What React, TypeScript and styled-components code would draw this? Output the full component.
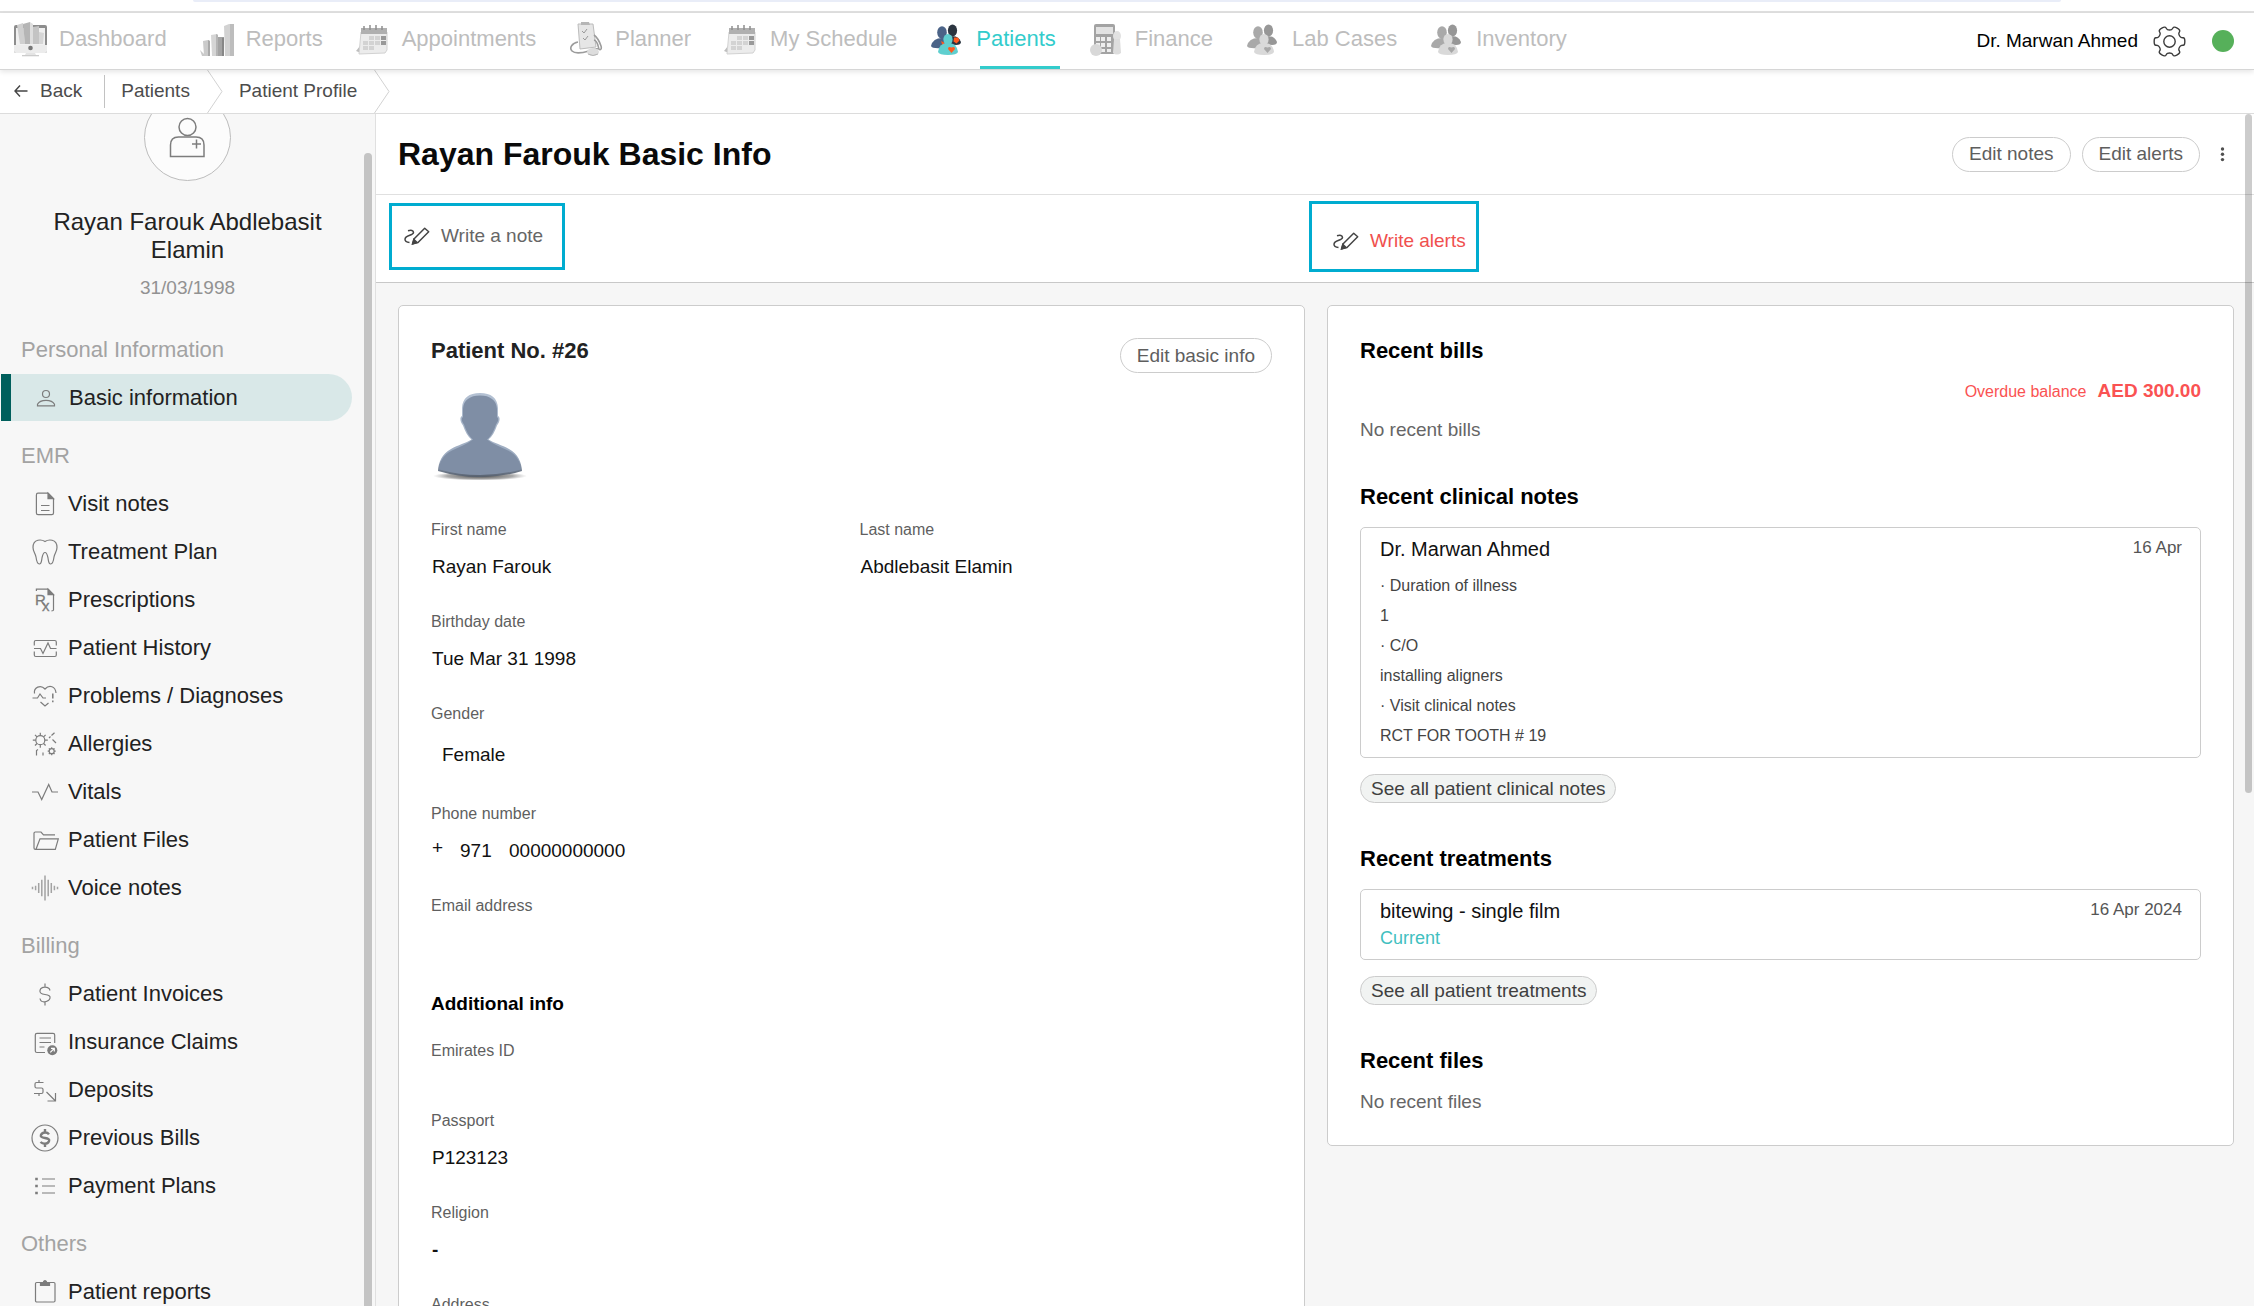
import React from "react";
import styled, { createGlobalStyle, css } from "styled-components";

const line = "#dcdcdc";
const edge = "#cccccc";
const teal = "#33cccc";
const frameBlue = "#00acd0";
const danger = "#fa5252";

const GlobalStyle = createGlobalStyle`
  *, *::before, *::after { box-sizing: border-box; }
  body {
    margin: 0;
    background: #ffffff;
    color: #111111;
    font-family: "Liberation Sans", Arial, Helvetica, sans-serif;
    font-size: 19px;
  }
  button { font-family: inherit; cursor: pointer; }
  a { color: inherit; text-decoration: none; }
  svg { display: block; flex: none; }
`;

/* ---------- shell ---------- */

const Shell = styled.div`
  display: flex;
  flex-direction: column;
  height: 100vh;
  overflow: hidden;
`;

const TopStrip = styled.div`
  flex: none;
  height: 13px;
  padding: 0 193px;
  border-bottom: 2px solid #e0e0e0;
  &::before {
    content: "";
    display: block;
    height: 2px;
    border-radius: 0 0 8px 8px;
    background: #e9edf8;
  }
`;

const NavBar = styled.header`
  flex: none;
  display: flex;
  justify-content: space-between;
  height: 57px;
  padding: 0 20px 0 13px;
  border-bottom: 1px solid #d6d6d6;
  box-shadow: 0 2px 5px rgba(0, 0, 0, 0.1);
  z-index: 1;
`;

const Tabs = styled.nav`
  display: flex;
  gap: 33px;
`;

const Tab = styled.a<{ $active?: boolean }>`
  display: flex;
  align-items: center;
  gap: 12px;
  padding-bottom: 4px;
  font-size: 22px;
  color: ${(p) => (p.$active ? teal : "#bdbdbd")};
`;

const TabLabel = styled.span<{ $active?: boolean }>`
  position: relative;
  line-height: 26px;
  ${(p) =>
    p.$active &&
    css`
      &::after {
        content: "";
        position: absolute;
        left: 4px;
        right: -4px;
        bottom: -17px;
        height: 3px;
        background: ${teal};
      }
    `}
`;

const UserArea = styled.div`
  display: flex;
  align-items: center;
  color: #000000;
`;

const IconButton = styled.button`
  display: flex;
  padding: 0;
  border: 0;
  background: none;
  color: #3c3c3c;
`;

const SettingsButton = styled(IconButton)`
  margin: 0 26px 0 15px;
`;

const StatusDot = styled.span`
  width: 22px;
  height: 22px;
  border-radius: 50%;
  background: #56b05a;
`;

const Crumbs = styled.nav`
  flex: none;
  display: flex;
  align-items: center;
  height: 44px;
  border-bottom: 1px solid ${line};
  color: #4c4c4c;
  background: #ffffff;
`;

const BackLink = styled.a`
  display: flex;
  align-items: center;
  gap: 12px;
  height: 33px;
  padding: 0 22px 2px 14px;
  border-right: 1px solid #c2c2c2;
`;

const Crumb = styled.a`
  padding: 0 17px 2px 16px;
`;

const Body = styled.div`
  flex: 1;
  min-height: 0;
  display: grid;
  grid-template-columns: 376px minmax(0, 1fr);
`;

/* ---------- sidebar ---------- */

const Sidebar = styled.aside`
  position: relative;
  overflow: hidden;
  border-right: 1px solid #e0e0e0;
  background: #f7f7f7;
  color: #222222;
`;

const SideThumb = styled.div`
  position: absolute;
  top: 39px;
  right: 3px;
  bottom: 0;
  width: 8px;
  border-radius: 4px 4px 0 0;
  background: #c4c4c4;
`;

const Profile = styled.div`
  display: flex;
  flex-direction: column;
  align-items: center;
  margin-top: -20px;
  padding-bottom: 15px;
  text-align: center;
`;

const ProfileCircle = styled.button`
  display: flex;
  align-items: center;
  justify-content: center;
  width: 87px;
  height: 87px;
  margin-bottom: 27px;
  padding: 0;
  border: 1px solid #bdbdbd;
  border-radius: 50%;
  background: #fcfcfc;
`;

const ProfileName = styled.div`
  width: 300px;
  font-size: 24px;
  line-height: 28px;
`;

const ProfileDate = styled.div`
  margin-top: 12px;
  line-height: 24px;
  color: #929292;
`;

const GroupTitle = styled.h2`
  margin: 11px 0 0;
  padding-left: 21px;
  font-size: 22px;
  font-weight: 400;
  line-height: 48px;
  color: #a3a3a3;
`;

const List = styled.ul`
  margin: 0;
  padding: 0;
  list-style: none;
`;

const SideLink = styled.a<{ $active?: boolean }>`
  display: flex;
  align-items: center;
  gap: 9px;
  height: 47px;
  margin: 0 23px 1px 0;
  padding-left: 31px;
  font-size: 22px;
  color: #222222;
  ${(p) =>
    p.$active &&
    css`
      margin-left: 1px;
      padding-left: 21px;
      border-left: 10px solid #005f5c;
      border-radius: 0 24px 24px 0;
      background: #d9e8e8;
    `}
`;

/* ---------- main column ---------- */

const Main = styled.main`
  position: relative;
  overflow: hidden;
  background: #f6f6f6;
`;

const MainThumb = styled.div`
  position: absolute;
  top: 0;
  right: 2px;
  width: 7px;
  height: 57%;
  border-radius: 4px;
  background: rgba(0, 0, 0, 0.2);
`;

const TitleRow = styled.div`
  display: flex;
  align-items: center;
  justify-content: space-between;
  height: 81px;
  padding: 0 25px 0 22px;
  border-bottom: 1px solid #e0e0e0;
  background: #ffffff;
`;

const PageTitle = styled.h1`
  margin: 0;
  font-size: 32px;
  color: #0a0a0a;
`;

const Actions = styled.div`
  display: flex;
  align-items: center;
  gap: 11px;
`;

const PillButton = styled.button`
  height: 35px;
  padding: 0 16px;
  border: 1px solid ${edge};
  border-radius: 18px;
  background: #ffffff;
  font-size: 19px;
  color: #5e5e5e;
`;

const MoreButton = styled(IconButton)`
  padding: 0 4px 0 9px;
`;

const AlertRow = styled.div`
  display: grid;
  grid-template-columns: 1fr 1fr;
  align-items: center;
  height: 88px;
  padding: 0 12px 4px 0;
  border-bottom: 1px solid #c8c8c8;
  background: #ffffff;
`;

const WriteButton = styled.button<{ $alert?: boolean }>`
  justify-self: start;
  display: flex;
  align-items: center;
  gap: 11px;
  border: 3px solid ${frameBlue};
  background: #ffffff;
  font-size: 19px;
  color: ${(p) => (p.$alert ? "#f0504e" : "#666666")};
  ${(p) =>
    p.$alert
      ? css`
          height: 71px;
          padding: 8px 10px 0 21px;
        `
      : css`
          height: 67px;
          margin-left: 13px;
          padding: 0 19px 2px 12px;
        `}
`;

const Cards = styled.div`
  display: grid;
  grid-template-columns: 1fr 1fr;
  align-items: start;
  gap: 22px;
  padding: 22px 20px 22px 22px;
`;

const Card = styled.section`
  padding: 32px;
  border: 1px solid ${edge};
  border-radius: 5px;
  background: #ffffff;
`;

const CardHead = styled.div`
  display: flex;
  align-items: flex-start;
  justify-content: space-between;
  margin-bottom: 13px;
`;

const CardTitle = styled.h2`
  margin: 0;
  font-size: 22px;
  line-height: 25px;
  color: #222222;
`;

const SubTitle = styled.h3`
  margin: 26px 0 25px;
  font-size: 19px;
  line-height: 24px;
  color: #000000;
`;

const Fields = styled.dl<{ $gap?: boolean }>`
  display: grid;
  grid-template-columns: 1fr 1fr;
  column-gap: 16px;
  margin: ${(p) => (p.$gap ? "34px 0 0" : "0")};
`;

const Field = styled.div<{ $half?: boolean }>`
  grid-column: ${(p) => (p.$half ? "auto" : "1 / -1")};
  margin-bottom: 33px;
`;

const Label = styled.dt`
  margin-bottom: 15px;
  font-size: 16px;
  line-height: 20px;
  color: #5f5f5f;
`;

const Value = styled.dd<{ $boxed?: boolean }>`
  display: flex;
  min-height: 2px;
  margin: 0;
  padding: ${(p) => (p.$boxed ? "0 11px" : "0 1px")};
  line-height: ${(p) => (p.$boxed ? "32px" : "24px")};
  color: #111111;
`;

const PhonePlus = styled.span`
  width: 28px;
  line-height: 18px;
`;

const PhoneCode = styled.span`
  width: 49px;
`;

const SectionTitle = styled.h2`
  margin: 0 0 18px;
  font-size: 22px;
  line-height: 25px;
  color: #000000;
`;

const Section = styled.section`
  & + & { margin-top: 43px; }
`;

const Balance = styled.div`
  display: flex;
  justify-content: flex-end;
  align-items: baseline;
  gap: 11px;
  margin-bottom: 17px;
  font-size: 16px;
  line-height: 20px;
  color: ${danger};
  strong { font-size: 19px; }
`;

const Muted = styled.p`
  margin: 0;
  line-height: 22px;
  color: #666666;
`;

const Entry = styled.article`
  padding: 9px 18px 6px 19px;
  border: 1px solid ${edge};
  border-radius: 5px;
`;

const EntryHead = styled.div`
  display: flex;
  align-items: flex-start;
  justify-content: space-between;
  font-size: 20px;
  line-height: 24px;
`;

const EntryDate = styled.time`
  font-size: 17px;
  line-height: 22px;
  color: #555555;
`;

const NoteLines = styled.div`
  margin-top: 10px;
  font-size: 16px;
  line-height: 30px;
  color: #444444;
`;

const Status = styled.div`
  font-size: 18px;
  line-height: 30px;
  color: #41bfbf;
`;

const SeeAll = styled.button`
  height: 29px;
  margin-top: 16px;
  padding: 0 10px;
  border: 1px solid ${edge};
  border-radius: 15px;
  background: #f1f3f2;
  font-size: 19px;
  line-height: 24px;
  color: #404040;
`;

/* ---------- header drawings ---------- */

const Art: React.FC<{ children: React.ReactNode }> = ({ children }) => (
  <svg width="34" height="36" viewBox="0 -1 34 36" aria-hidden="true">
    {children}
  </svg>
);

const DashboardArt = () => (
  <Art>
    <rect x="1" y="3" width="33" height="28" rx="2" fill="#8d8d8d" />
    <rect x="3" y="6" width="29" height="17" fill="#f0f0f0" />
    <path d="M1 23h33v6q0 2-2 2H3q-2 0-2-2z" fill="#ececec" />
    <path d="M4 3l6-2 2 21H7z" fill="#cfcfcf" />
    <path d="M10 2l7-2v22h-5z" fill="#b5b5b5" />
    <path d="M17 0l3 2v20h-3z" fill="#dedede" />
    <path d="M20 5l6-1v18h-6z" fill="#c4c4c4" />
    <path d="M26 10l5 1-1 11h-4z" fill="#d6d6d6" />
    <circle cx="17.500" cy="26" r="2.300" fill="#777" />
    <path d="M13 31h9l1 2H12z" fill="#e4e4e4" />
    <path d="M9 33h17v1.300H9z" fill="#cccccc" />
  </Art>
);

const ReportsArt = () => (
  <Art>
    <path d="M0 28l4 4v2H2z" fill="#c9c9c9" />
    <path d="M3 19l5-1 2 1v15H4z" fill="#cbcbcb" />
    <path d="M8 18l2 1v15H8z" fill="#a9a9a9" />
    <path d="M11 13l6-1 1 1v21h-6z" fill="#d5d5d5" />
    <path d="M16 12l2 1v21h-2z" fill="#b5b5b5" />
    <path d="M18 15l5 0 1 1v18h-6z" fill="#a4a4a4" />
    <path d="M22 16l2-1v19h-2z" fill="#878787" />
    <path d="M24 4l5-2 5 0v32h-9z" fill="#d2d2d2" />
    <path d="M30 2h4v32h-4z" fill="#bdbdbd" />
  </Art>
);

const CalendarArt = () => (
  <Art>
    <path d="M0 29l4-5 1 7z" fill="#bdbdbd" />
    <path d="M5 10h26v18l-2 3-26 1z" fill="#ececec" stroke="#d2d2d2" />
    <path d="M5 6h26v6H5z" fill="#b0b0b0" />
    <path d="M8 4v4M14 3v5M20 3v5M26 4v4" stroke="#8f8f8f" strokeWidth="1.500" />
    <path
      d="M13 14h5v4h-5zM19 14h5v4h-5zM7 19h5v4H7zM13 19h5v4h-5zM19 19h5v4h-5zM7 24h5v4H7zM13 24h5v4h-5z"
      fill="#d3d3d3"
    />
    <path d="M25 14h5v4h-5zM25 19h5v4h-5z" fill="#999999" />
  </Art>
);

const PlannerArt = () => (
  <Art>
    <path d="M9 2l15 0 3 23-16 2z" fill="#e6e6e6" stroke="#bcbcbc" />
    <path d="M12 0h8l1 3h-9z" fill="#b6b6b6" />
    <path d="M13 9l2 2 3-4M14 16l2 2 3-4" fill="none" stroke="#999" />
    <path
      d="M25 13c4 3 6 8 7 11s-1 5-2 3-1-8-5-9M9 20c-6 1-9 6-6 9s10 2 17 0 5-3 10-2"
      fill="none"
      stroke="#9c9c9c"
      strokeWidth="1.600"
    />
    <ellipse cx="24" cy="30" rx="6" ry="4" fill="#dddddd" />
    <path d="M19 32q5 3 10 0" fill="none" stroke="#b5b5b5" />
  </Art>
);

const FinanceArt = () => (
  <Art>
    <rect x="5" y="2" width="21" height="30" rx="2" fill="#a3a3a3" />
    <rect x="7" y="5" width="17" height="7" fill="#e2e2e2" />
    <path
      d="M7 15h4v4H7zM12 15h4v4h-4zM18 15h4v4h-4zM7 21h4v4H7zM12 21h4v4h-4zM18 21h4v4h-4zM12 27h4v3h-4zM18 27h4v3h-4z"
      fill="#eeeeee"
    />
    <circle cx="7" cy="28" r="6" fill="#d8d8d8" />
    <ellipse cx="28" cy="14" rx="4" ry="5" fill="#e2e2e2" />
    <path d="M25 17h6l1 14q-4 3-8 0z" fill="#dddddd" />
  </Art>
);

const PeopleArt: React.FC<{ color?: boolean }> = ({ color }) => {
  const [back, left, front, mark] = color
    ? ["#2b3540", "#4b6387", "#5fcfcf", "#ff5a1f"]
    : ["#979797", "#a9a9a9", "#d9d9d9", "#a8a8a8"];
  return (
    <Art>
      <ellipse cx="22.500" cy="8.500" rx="4.600" ry="6" fill={back} />
      <path d="M18 15q10-3 13 5 0 3-5 3l-8-1z" fill={back} />
      <ellipse cx="12" cy="10.500" rx="4.800" ry="6.200" fill={left} />
      <path d="M1 24q2-8 11-8 6 0 7 4l-6 6q-11 1-12-2z" fill={left} />
      {color && <path d="M24 15.500l4 0 1.500 3-3 3-3-2zM11 19l4 2-2 4z" fill={mark} />}
      <ellipse cx="18" cy="17.500" rx="4.600" ry="5.500" fill={front} />
      <path d="M8 30q1-9 10-9t10 9q-1 3-10 3T8 30z" fill={front} />
      <path d="M21.500 31l-3.500-4q0-3 3.500-1.500Q25 24 25 27z" fill={mark} />
    </Art>
  );
};

const gearPath = (() => {
  const at = (deg: number, r: number) => {
    const a = (deg * Math.PI) / 180;
    return [16.5 + r * Math.cos(a), 16.5 + r * Math.sin(a)];
  };
  const pts: number[][] = [];
  for (let k = 0; k < 6; k++) {
    const a = k * 60;
    pts.push(at(a - 24, 11.6), at(a - 17, 12.6), at(a - 14, 15.8));
    pts.push(at(a + 14, 15.8), at(a + 17, 12.6), at(a + 24, 11.6));
  }
  const mid = (p: number[], q: number[]) => `${(p[0] + q[0]) / 2} ${(p[1] + q[1]) / 2}`;
  const n = pts.length;
  let d = `M${mid(pts[n - 1], pts[0])}`;
  pts.forEach((p, i) => {
    d += `Q${p[0]} ${p[1]} ${mid(p, pts[(i + 1) % n])}`;
  });
  return d + "Z";
})();

const GearIcon = () => (
  <svg width="33" height="33" viewBox="0 0 33 33" fill="none" stroke="currentColor" strokeWidth="1.400" aria-hidden="true">
    <path d={gearPath} />
    <circle cx="16.500" cy="16.500" r="5.700" />
  </svg>
);

const BackArrow = () => (
  <svg width="14" height="14" viewBox="0 0 14 14" fill="none" stroke="#444" strokeWidth="1.400" aria-hidden="true">
    <path d="M13.500 7H1M6 1.500L1 7l5 5.500" />
  </svg>
);

const Chevron = () => (
  <svg width="16" height="43" viewBox="0 0 16 43" fill="none" stroke="#d2d2d2" aria-hidden="true">
    <path d="M0.500 0L15 21.500 0.500 43" />
  </svg>
);

const DotsIcon = () => (
  <svg width="5" height="15" viewBox="0 0 5 15" fill="#505050" aria-hidden="true">
    <circle cx="2.500" cy="2" r="1.700" />
    <circle cx="2.500" cy="7.300" r="1.700" />
    <circle cx="2.500" cy="12.600" r="1.700" />
  </svg>
);

const PenIcon = () => (
  <svg width="26" height="18" viewBox="0 0 26 18" fill="none" stroke="#444" strokeWidth="1.500" aria-hidden="true">
    <path d="M4 3.800c3-1 5.500-.5 5.500 1.700 0 3-8.500 2.500-8.500 6.700 0 2 1.500 3 4.500 3.300" />
    <path d="M8.700 16.700l1.500-5L20.700 1.200l4 3.600-10.700 10.700z" strokeLinejoin="round" />
    <path d="M8.500 17l1.300-4.500 3.200 3z" fill="#444" />
  </svg>
);

const NewPersonIcon = () => (
  <svg width="37" height="41" viewBox="0 0 37 41" fill="none" stroke="#7d7d7d" strokeWidth="1.500" aria-hidden="true">
    <circle cx="18.500" cy="10" r="8.500" />
    <path d="M1.500 39.500V28q0-8 8-8h17.500q8 0 8 8v11.500z" />
    <path d="M27.500 22.500v9M23 27h9" />
  </svg>
);

const Silhouette = () => (
  <svg width="100" height="100" viewBox="0 0 100 100" role="img" aria-label="Patient photo">
    <defs>
      <radialGradient id="ground">
        <stop offset="0" stopColor="#333" stopOpacity="0.9" />
        <stop offset="0.700" stopColor="#555" stopOpacity="0.500" />
        <stop offset="1" stopColor="#777" stopOpacity="0" />
      </radialGradient>
      <linearGradient id="rim" x1="0" y1="0" x2="0" y2="1">
        <stop offset="0" stopColor="#b4c1d3" />
        <stop offset="0.800" stopColor="#9aa9be" />
        <stop offset="1" stopColor="#56606e" />
      </linearGradient>
    </defs>
    <ellipse cx="49" cy="90" rx="47" ry="4.500" fill="url(#ground)" />
    <path
      d="M49 7C38 7 31.500 12 31 22v8c-2.500 1-2 6 1 9.500 2 6 5 11 8.500 14C35 57 27 59 20 63 11 68 7.500 76 7 85q20 6 42 6t42-6c-.5-9-4-17-13-22-7-4-15-6-20.500-9.500 3.500-3 6.500-8 8.500-14 3-3.500 3.500-8.500 1-9.500v-8C66.500 12 60 7 49 7z"
      fill="url(#rim)"
    />
    <path
      d="M49 9.500C39 9.500 32.500 14 32 23v8c-2 1-1.500 4.500 1 7.500 2 6 5 12 9 15C36 58 28 61 21 64.500 12 69 8.500 76 8 83.500q20 5.500 41 5.500t41-5.500C89.500 76 86 69 77 64.500 70 61 62 58 56 53.500c4-3 7-9 9-15 2.500-3 3-6.500 1-7.500v-8C65.500 14 59 9.500 49 9.500z"
      fill="#7f8ea5"
    />
  </svg>
);

/* ---------- sidebar drawings ---------- */

const Glyph: React.FC<{ children: React.ReactNode }> = ({ children }) => (
  <svg width="28" height="28" viewBox="0 0 28 28" fill="none" stroke="#7c7c7c" strokeWidth="1.200" aria-hidden="true">
    {children}
  </svg>
);

const glyphs = {
  person: (
    <>
      <circle cx="14" cy="10" r="3.500" />
      <path d="M5.500 21.800v-1.500q2-4 8.500-4t8.500 4v1.500z" />
    </>
  ),
  note: (
    <>
      <path d="M7 3.200h10l5.500 5.500V23q0 1.700-1.700 1.700H7Q5.400 24.700 5.400 23V5Q5.400 3.200 7 3.200z" />
      <path d="M17 3.200v5.500h5.500z" fill="#7c7c7c" />
      <path d="M10 15.500h8.500M10 20.500h8.500" />
    </>
  ),
  tooth: (
    <path d="M14 3.500c3-2 12-3.300 12 6 0 4-2.500 6-3 9.500-.4 3-1 7-3.300 7s-2.200-3.500-2.700-6c-.4-2-1-5.500-3-5.500s-2.600 3.500-3 5.500c-.5 2.500-.4 6-2.700 6S5.400 22 5 19C4.500 15.500 2 13.500 2 9.500c0-9.300 9-8 12-6z" />
  ),
  rx: (
    <>
      <path d="M5.400 5V3.200H17l5.500 5.500V24q0 .8-2 .8" />
      <path d="M17 3.200v5.500h5.500z" fill="#7c7c7c" />
      <text x="4" y="19" fontSize="15" fill="#7c7c7c" strokeWidth="0.300">R</text>
      <text x="11" y="25" fontSize="15" fill="#7c7c7c" strokeWidth="0.300">x</text>
    </>
  ),
  history: (
    <>
      <path d="M3.300 11.500V8q0-1.500 1.500-1.500h19Q25.300 6.500 25.300 8v3.500M3.300 17.500V21q0 1.500 1.500 1.500h19q1.500 0 1.500-1.500v-3.500" />
      <path d="M3 14.500h6.500l2.500 5L17 9l2.500 5.500h6" />
    </>
  ),
  heart: (
    <>
      <path d="M3.500 11.500c-1-6 6-9.500 10.500-4.500 4.500-5 10.500-2.500 11 4M1.500 16h5l2.500-4 3 4h3M9.500 20l4.500 4 3.500-3" />
      <path d="M21.800 11.500v5M21.800 18.500v1.700" strokeWidth="1.500" />
    </>
  ),
  allergy: (
    <>
      <circle cx="9.300" cy="10.200" r="4.500" />
      <path d="M9.300 2.700v3M9.300 14.700v3M1.800 10.200h3M13.800 10.200h3M4 4.900l2 2M12.600 13.500l2 2M14.600 4.900l-2 2M6 13.500l-2 2" />
      <circle cx="20.700" cy="21.200" r="2.500" />
      <path d="M20.700 17.200v1.500M20.700 23.700v1.500M16.700 21.200h1.500M23.200 21.200h1.500M17.900 18.400l1 1M22.500 23l1 1M23.500 18.400l-1 1M18.900 23l-1 1" />
      <path d="M18 8l1.500-1.500M20.500 5.500L23.500 2.700M21.500 9.500l3.500 3.500M5.500 25.500v-5l1.500-1M12 22.500v3" />
    </>
  ),
  pulse: <path d="M1 14h6l3.700 7.500L17.700 6.500 21 14h6" />,
  folder: (
    <path d="M5 23.300H4.300Q3 23.300 3 22V7.300Q3 6 4.300 6H10l2.500 2.800H24M5 23.300L9 12.800h18.300L24.300 23.300z" />
  ),
  voice: (
    <path
      d="M1.500 12.700v2.600M4.600 11.700v4.600M7.700 9v10M10.800 5.700v16.600M14 1.400v25.200M17.200 5.700v16.600M20.300 9v10M23.400 11.700v4.600M26.500 12.700v2.600"
      stroke="#a3a3a3"
      strokeWidth="1.500"
    />
  ),
  dollar: (
    <path d="M14 3.500v4M14 21.500v4M19 10.500q-.8-3.300-5-3.300t-5 3.300 5 4 5 3.700-5 3.600-5-3.300" />
  ),
  claim: (
    <>
      <path d="M14 24.500H6Q4.300 24.500 4.300 23V7Q4.300 5.300 6 5.300h16Q23.700 5.300 23.700 7v8M8.500 10h11.500M8.500 14.500h11.500M8.500 19h5" />
      <circle cx="21.300" cy="22.300" r="5" fill="#7c7c7c" stroke="none" />
      <path d="M19.300 24.300l4-4M20 20.300h3.300v3.300" stroke="#fff" />
    </>
  ),
  deposit: (
    <>
      <path d="M12.500 6.500h-7q-1.500 0-1.500 1.500v2.500Q4 12 5.500 12h5q1.500 0 1.500 1.500V16q0 1.500-1.500 1.500H3M8 4v2.500M8 17.500V20" />
      <path d="M15.500 16l9 9M24.500 17v8h-8" />
    </>
  ),
  bill: (
    <>
      <circle cx="14" cy="14" r="13" />
      <path d="M14 5v3M14 20v3M18 10.300q-1.200-1.800-4-1.800t-4 2.400 4 3.100 4 3.200-4 2.500-4.500-1.700" strokeWidth="2.400" />
    </>
  ),
  list: (
    <>
      <path d="M11 7h13M11 14h13M11 21h13" />
      <path d="M4.200 7h2.600M4.200 14h2.600M4.200 21h2.600" strokeWidth="2.600" />
    </>
  ),
  clipboard: (
    <>
      <rect x="4.500" y="4.500" width="19.500" height="19.500" rx="1.200" />
      <path d="M9.500 4.500h2.700q.3-2 1.800-2t1.800 2h2.700v3h-9z" fill="#7c7c7c" />
    </>
  ),
};

/* ---------- content ---------- */

const tabs = [
  { label: "Dashboard", art: <DashboardArt /> },
  { label: "Reports", art: <ReportsArt /> },
  { label: "Appointments", art: <CalendarArt /> },
  { label: "Planner", art: <PlannerArt /> },
  { label: "My Schedule", art: <CalendarArt /> },
  { label: "Patients", art: <PeopleArt color />, active: true },
  { label: "Finance", art: <FinanceArt /> },
  { label: "Lab Cases", art: <PeopleArt /> },
  { label: "Inventory", art: <PeopleArt /> },
];

type Item = { label: string; icon: keyof typeof glyphs; active?: boolean };

const groups: { title: string; items: Item[] }[] = [
  {
    title: "Personal Information",
    items: [{ label: "Basic information", icon: "person", active: true }],
  },
  {
    title: "EMR",
    items: [
      { label: "Visit notes", icon: "note" },
      { label: "Treatment Plan", icon: "tooth" },
      { label: "Prescriptions", icon: "rx" },
      { label: "Patient History", icon: "history" },
      { label: "Problems / Diagnoses", icon: "heart" },
      { label: "Allergies", icon: "allergy" },
      { label: "Vitals", icon: "pulse" },
      { label: "Patient Files", icon: "folder" },
      { label: "Voice notes", icon: "voice" },
    ],
  },
  {
    title: "Billing",
    items: [
      { label: "Patient Invoices", icon: "dollar" },
      { label: "Insurance Claims", icon: "claim" },
      { label: "Deposits", icon: "deposit" },
      { label: "Previous Bills", icon: "bill" },
      { label: "Payment Plans", icon: "list" },
    ],
  },
  { title: "Others", items: [{ label: "Patient reports", icon: "clipboard" }] },
];

const noteLines = [
  "· Duration of illness",
  "1",
  "· C/O",
  "installing aligners",
  "· Visit clinical notes",
  "RCT FOR TOOTH # 19",
];

const Info: React.FC<{ label: string; half?: boolean; boxed?: boolean; children?: React.ReactNode }> = ({
  label,
  half,
  boxed,
  children,
}) => (
  <Field $half={half}>
    <Label>{label}</Label>
    <Value $boxed={boxed}>{children}</Value>
  </Field>
);

export default function App() {
  return (
    <Shell>
      <GlobalStyle />
      <TopStrip />
      <NavBar>
        <Tabs aria-label="Main">
          {tabs.map((t) => (
            <Tab key={t.label} href="#" $active={t.active}>
              {t.art}
              <TabLabel $active={t.active}>{t.label}</TabLabel>
            </Tab>
          ))}
        </Tabs>
        <UserArea>
          <span>Dr. Marwan Ahmed</span>
          <SettingsButton aria-label="Settings">
            <GearIcon />
          </SettingsButton>
          <StatusDot />
        </UserArea>
      </NavBar>
      <Crumbs aria-label="Breadcrumb">
        <BackLink href="#">
          <BackArrow />
          Back
        </BackLink>
        <Crumb href="#">Patients</Crumb>
        <Chevron />
        <Crumb href="#">Patient Profile</Crumb>
        <Chevron />
      </Crumbs>
      <Body>
        <Sidebar>
          <Profile>
            <ProfileCircle aria-label="Patient picture">
              <NewPersonIcon />
            </ProfileCircle>
            <ProfileName>Rayan Farouk Abdlebasit Elamin</ProfileName>
            <ProfileDate>31/03/1998</ProfileDate>
          </Profile>
          {groups.map((g) => (
            <React.Fragment key={g.title}>
              <GroupTitle>{g.title}</GroupTitle>
              <List>
                {g.items.map((item) => (
                  <li key={item.label}>
                    <SideLink href="#" $active={item.active}>
                      <Glyph>{glyphs[item.icon]}</Glyph>
                      {item.label}
                    </SideLink>
                  </li>
                ))}
              </List>
            </React.Fragment>
          ))}
          <SideThumb />
        </Sidebar>
        <Main>
          <TitleRow>
            <PageTitle>Rayan Farouk Basic Info</PageTitle>
            <Actions>
              <PillButton>Edit notes</PillButton>
              <PillButton>Edit alerts</PillButton>
              <MoreButton aria-label="More">
                <DotsIcon />
              </MoreButton>
            </Actions>
          </TitleRow>
          <AlertRow>
            <WriteButton>
              <PenIcon />
              Write a note
            </WriteButton>
            <WriteButton $alert>
              <PenIcon />
              Write alerts
            </WriteButton>
          </AlertRow>
          <Cards>
            <Card>
              <CardHead>
                <CardTitle>Patient No. #26</CardTitle>
                <PillButton>Edit basic info</PillButton>
              </CardHead>
              <Silhouette />
              <Fields $gap>
                <Info label="First name" half>Rayan Farouk</Info>
                <Info label="Last name" half>Abdlebasit Elamin</Info>
                <Info label="Birthday date">Tue Mar 31 1998</Info>
                <Info label="Gender" boxed>Female</Info>
                <Info label="Phone number">
                  <PhonePlus>+</PhonePlus>
                  <PhoneCode>971</PhoneCode>
                  <span>00000000000</span>
                </Info>
                <Info label="Email address" />
              </Fields>
              <SubTitle>Additional info</SubTitle>
              <Fields>
                <Info label="Emirates ID" />
                <Info label="Passport">P123123</Info>
                <Info label="Religion">
                  <strong>-</strong>
                </Info>
                <Info label="Address">-</Info>
              </Fields>
            </Card>
            <Card>
              <Section>
                <SectionTitle>Recent bills</SectionTitle>
                <Balance>
                  <span>Overdue balance</span>
                  <strong>AED 300.00</strong>
                </Balance>
                <Muted>No recent bills</Muted>
              </Section>
              <Section>
                <SectionTitle>Recent clinical notes</SectionTitle>
                <Entry>
                  <EntryHead>
                    <span>Dr. Marwan Ahmed</span>
                    <EntryDate>16 Apr</EntryDate>
                  </EntryHead>
                  <NoteLines>
                    {noteLines.map((text) => (
                      <div key={text}>{text}</div>
                    ))}
                  </NoteLines>
                </Entry>
                <SeeAll>See all patient clinical notes</SeeAll>
              </Section>
              <Section>
                <SectionTitle>Recent treatments</SectionTitle>
                <Entry>
                  <EntryHead>
                    <span>bitewing - single film</span>
                    <EntryDate>16 Apr 2024</EntryDate>
                  </EntryHead>
                  <Status>Current</Status>
                </Entry>
                <SeeAll>See all patient treatments</SeeAll>
              </Section>
              <Section>
                <SectionTitle>Recent files</SectionTitle>
                <Muted>No recent files</Muted>
              </Section>
            </Card>
          </Cards>
          <MainThumb />
        </Main>
      </Body>
    </Shell>
  );
}
